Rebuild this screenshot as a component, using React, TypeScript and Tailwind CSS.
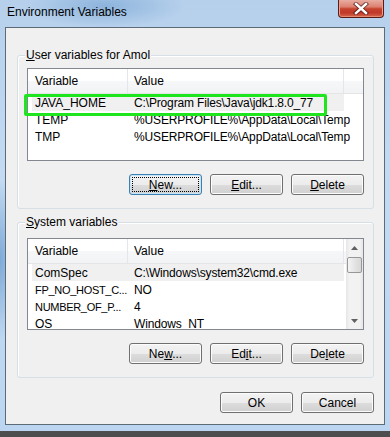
import React from "react";

function Btn({ children, focused = false }: { children: React.ReactNode; focused?: boolean }) {
  return (
    <div
      className={
        focused
          ? "relative w-[73px] h-[21px] rounded-[3px] border border-[#3c7fb1] bg-[linear-gradient(to_bottom,#f3f3f3_0%,#ececec_50%,#dddddd_51%,#d0d0d0_100%)] shadow-[inset_0_0_0_1px_#c6e4f7] flex items-center justify-center"
          : "relative w-[73px] h-[21px] rounded-[3px] border border-[#707070] bg-[linear-gradient(to_bottom,#f3f3f3_0%,#ececec_50%,#dddddd_51%,#d0d0d0_100%)] shadow-[inset_0_0_0_1px_#fcfcfc] flex items-center justify-center"
      }
    >
      {focused && <div className="absolute inset-[2px] border border-dotted border-black" />}
      <span className="leading-[14px] relative">{children}</span>
    </div>
  );
}

function GroupLabel({ children }: { children: React.ReactNode }) {
  return (
    <div className="absolute left-[7px] -top-[9px] px-[1px] bg-[#f0f0f0] leading-[16px]">{children}</div>
  );
}

function Header({ extra = true }: { extra?: boolean }) {
  return (
    <div className="h-[25px] flex border-b border-[#e5e5e5] bg-[linear-gradient(to_bottom,#ffffff_0%,#ffffff_50%,#f6f7f9_50%,#f2f3f5_100%)] shrink-0">
      <div className="w-[100px] border-r border-[#e3e6ea] pl-[7px] flex items-center leading-[14px]">Variable</div>
      <div className="w-[216px] border-r border-[#e3e6ea] pl-[6px] flex items-center leading-[14px]">Value</div>
      {extra && <div className="flex-1" />}
    </div>
  );
}

function Row({
  name,
  value,
  selected = false,
  squeeze = false,
}: {
  name: string;
  value: string;
  selected?: boolean;
  squeeze?: boolean;
}) {
  return (
    <div
      className={
        selected
          ? "h-[17px] ml-[4px] w-[312px] flex items-center bg-[#f0f0f0] shrink-0"
          : "h-[17px] ml-[4px] w-[312px] flex items-center shrink-0"
      }
    >
      <div
        className={
          squeeze
            ? "w-[96px] shrink-0 pl-[3px] leading-[14px] whitespace-nowrap text-[11px] tracking-[-0.3px]"
            : "w-[96px] shrink-0 pl-[3px] leading-[14px] whitespace-nowrap"
        }
      >
        {name}
      </div>
      <div className="w-[216px] shrink-0 pl-[6px] leading-[14px] whitespace-nowrap tracking-[-0.15px]">{value}</div>
    </div>
  );
}

function Arrow({ up }: { up: boolean }) {
  return (
    <div className="h-[17px] flex items-center justify-center shrink-0">
      <svg width="7" height="4" viewBox="0 0 7 4">
        {up ? <path d="M0 4 L3.5 0 L7 4 Z" fill="#606060" /> : <path d="M0 0 L3.5 4 L7 0 Z" fill="#606060" />}
      </svg>
    </div>
  );
}

function Scrollbar() {
  return (
    <div className="w-[17px] h-full shrink-0 flex flex-col bg-[linear-gradient(to_right,#e6e6e6_0%,#f2f2f2_20%,#f2f2f2_80%,#e6e6e6_100%)]">
      <Arrow up />
      <div className="mt-[1px] mx-[1px] h-[16px] rounded-[2px] border border-[#979797] bg-[linear-gradient(to_right,#f4f4f4,#e4e4e4_50%,#d8d8d8)] shrink-0" />
      <div className="flex-1" />
      <Arrow up={false} />
    </div>
  );
}

function CloseButton() {
  return (
    <div className="mr-[6px] w-[46px] h-[18px] rounded-b-[4px] border border-t-0 border-[#5b1c14] bg-[linear-gradient(to_bottom,#e9aca2_0%,#dc8170_40%,#c5432d_52%,#c0392a_75%,#d8674a_100%)] shadow-[inset_0_-1px_0_#e58a70,inset_1px_0_0_#e8a090,inset_-1px_0_0_#e8a090] flex items-center justify-center">
      <svg width="16" height="13" viewBox="0 0 16 13">
        <path d="M3 2 L13 11 M13 2 L3 11" stroke="#4a1410" strokeWidth="4.2" strokeLinecap="square" opacity="0.75" />
        <path d="M3 2 L13 11 M13 2 L3 11" stroke="#ffffff" strokeWidth="2.4" strokeLinecap="square" />
      </svg>
    </div>
  );
}

export default function App() {
  return (
    <div className="w-[390px] h-[437px] overflow-hidden bg-[linear-gradient(to_bottom,#7c7c7c,#4d4d4d)] font-[family-name:Liberation_Sans,Arial,sans-serif] text-[12px] text-black">
      <div className="w-[390px] h-[431px] flex flex-col bg-[radial-gradient(ellipse_80px_22px_at_105px_6px,#8db4dc,transparent),radial-gradient(ellipse_20px_80px_at_0px_260px,#7ea9d6,transparent),linear-gradient(to_bottom,#b6d0ec,#c3daf2_40%,#bcd6f1)]">
        <div className="h-[27px] flex items-start justify-between shrink-0">
          <div className="pl-[7px] pt-[3px] leading-[18px]">Environment Variables</div>
          <CloseButton />
        </div>
        <div className="ml-[5px] w-[380px] h-[398px] border border-[#5d6a78] bg-[#f0f0f0] flex flex-col pl-[11px] pr-[10px] shrink-0">
          {/* User variables */}
          <div className="relative mt-[27px] w-[357px] h-[154px] rounded-[3px] border border-[#d5dfe5] shadow-[inset_1px_1px_0_#ffffff] pt-[12px] pl-[9px] pr-[9px] flex flex-col shrink-0">
            <GroupLabel>
              <u>U</u>ser variables for Amol
            </GroupLabel>
            <div className="h-[93px] border border-[#828790] bg-white flex flex-col shrink-0">
              <Header />
              <Row name="JAVA_HOME" value="C:\Program Files\Java\jdk1.8.0_77" selected />
              <Row name="TEMP" value="%USERPROFILE%\AppData\Local\Temp" />
              <Row name="TMP" value="%USERPROFILE%\AppData\Local\Temp" />
            </div>
            <div className="mt-[13px] flex justify-end gap-[8px]">
              <Btn focused>
                <u>N</u>ew...
              </Btn>
              <Btn>
                <u>E</u>dit...
              </Btn>
              <Btn>
                <u>D</u>elete
              </Btn>
            </div>
            <div className="absolute left-[6px] top-[38px] w-[303px] h-[22px] rounded-[2px] border-[3px] border-[#1fe51f]" />
          </div>

          {/* System variables */}
          <div className="relative mt-[13px] w-[357px] h-[156px] rounded-[3px] border border-[#d5dfe5] shadow-[inset_1px_1px_0_#ffffff] pt-[15px] pl-[9px] pr-[9px] flex flex-col shrink-0">
            <GroupLabel>
              <u>S</u>ystem variables
            </GroupLabel>
            <div className="h-[92px] border border-[#828790] bg-white flex shrink-0">
              <div className="flex-1 flex flex-col overflow-hidden">
                <Header />
                <Row name="ComSpec" value="C:\Windows\system32\cmd.exe" selected />
                <Row name="FP_NO_HOST_C..." value="NO" squeeze />
                <Row name="NUMBER_OF_P..." value="4" squeeze />
                <Row name="OS" value="Windows_NT" />
              </div>
              <Scrollbar />
            </div>
            <div className="mt-[13px] flex justify-end gap-[8px]">
              <Btn>
                Ne<u>w</u>...
              </Btn>
              <Btn>
                Ed<u>i</u>t...
              </Btn>
              <Btn>
                De<u>l</u>ete
              </Btn>
            </div>
          </div>

          <div className="mt-[14px] flex justify-end gap-[8px]">
            <Btn>OK</Btn>
            <Btn>Cancel</Btn>
          </div>
        </div>
      </div>
    </div>
  );
}
